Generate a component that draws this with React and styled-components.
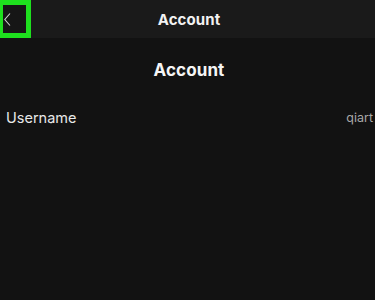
import React from "react";
import styled, { createGlobalStyle } from "styled-components";

const Global = createGlobalStyle`
  html, body { margin: 0; padding: 0; background: #121212; }
  body { font-family: Inter, "Noto Sans", sans-serif; }
`;

const Page = styled.div`
  width: 375px;
  height: 300px;
  background: #121212;
  overflow: hidden;
`;

const TopBar = styled.header`
  height: 38px;
  background: #1a1a1a;
  display: grid;
  grid-template-columns: 60px 1fr 60px;
  align-items: center;
`;

const BackButton = styled.button`
  width: 31px;
  height: 38px;
  box-sizing: border-box;
  border: 5px solid #1ee01e;
  border-left-width: 3px;
  background: #161616;
  padding: 1px 0 0 1px;
  display: flex;
  align-items: center;
  justify-content: flex-start;
`;

const BarTitle = styled.div`
  text-align: center;
  color: #f2f2f2;
  font-weight: 700;
  font-size: 15px;
  letter-spacing: 0.1px;
  padding-left: 3px;
`;

const Heading = styled.h1`
  margin: 0;
  padding-top: 22px;
  padding-left: 3px;
  text-align: center;
  color: #f5f5f5;
  font-weight: 700;
  font-size: 17px;
  letter-spacing: 0.1px;
  line-height: 20px;
`;

const Row = styled.div`
  display: flex;
  justify-content: space-between;
  align-items: center;
  padding: 0 2px 0 6px;
  margin-top: 27px;
  height: 20px;
`;

const Label = styled.span`
  color: #e8e8e8;
  font-size: 14.5px;
`;

const Value = styled.span`
  color: #a8a8a8;
  font-size: 12.5px;
`;

export default function App() {
  return (
    <Page>
      <Global />
      <TopBar>
        <div>
          <BackButton aria-label="Back">
            <svg width="7" height="13" viewBox="0 0 7 13">
              <path d="M6 0.5 L0.8 6.5 L6 12.5" fill="none" stroke="#d0d0d0" strokeWidth="1.1" />
            </svg>
          </BackButton>
        </div>
        <BarTitle>Account</BarTitle>
        <div />
      </TopBar>
      <Heading>Account</Heading>
      <Row>
        <Label>Username</Label>
        <Value>qiart</Value>
      </Row>
    </Page>
  );
}
